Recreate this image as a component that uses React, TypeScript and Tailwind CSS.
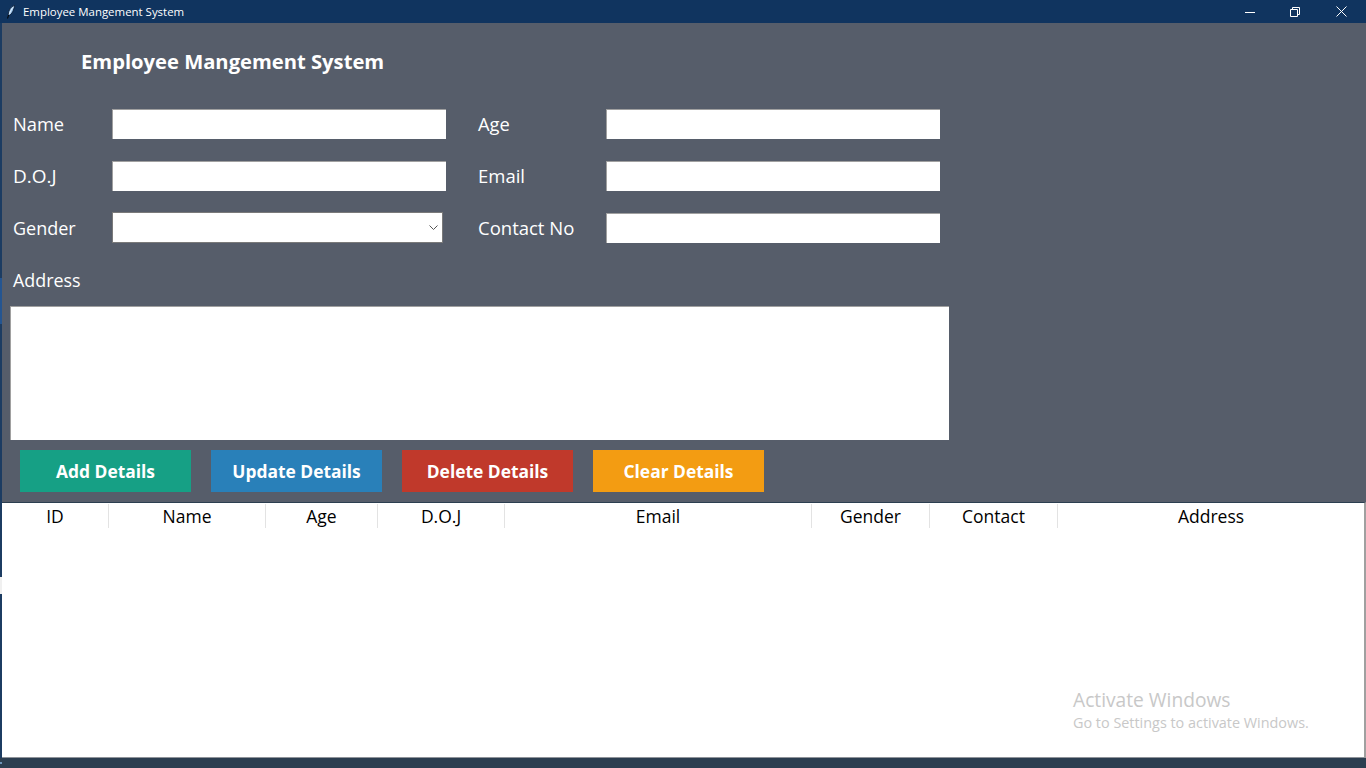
import React from "react";

const font = { fontFamily: '"Open Sans", "Noto Sans", sans-serif' };

function Field({ label, labelW, inputW, size = "text-[18.3px]" }: { label: string; labelW: string; inputW: string; size?: string }) {
  return (
    <div className="flex items-center">
      <span className={`${labelW} ${size} leading-[24px] text-white`}>{label}</span>
      <input className={`${inputW} h-[30px] bg-white border-l border-t border-[#a0a0a0] outline-none`} readOnly />
    </div>
  );
}

const buttons = [
  { t: "Add Details", c: "bg-[#16a085]" },
  { t: "Update Details", c: "bg-[#2980b9]" },
  { t: "Delete Details", c: "bg-[#c0392b]" },
  { t: "Clear Details", c: "bg-[#f39c12]" },
];

const cols = [
  { t: "ID", w: "w-[107px]" },
  { t: "Name", w: "w-[157px]" },
  { t: "Age", w: "w-[112px]" },
  { t: "D.O.J", w: "w-[127px]" },
  { t: "Email", w: "w-[307px]" },
  { t: "Gender", w: "w-[118px]" },
  { t: "Contact", w: "w-[128px]" },
  { t: "Address", w: "flex-1" },
];

export default function App() {
  return (
    <div className="relative w-[1366px] h-[768px] flex flex-col bg-[#2c3e50] overflow-hidden" style={font}>
      {/* sliver of the desktop showing down the window's left edge */}
      <div className="absolute left-0 top-[23px] w-[2px] h-[735px] bg-[#1c3c62]" />
      <div className="absolute left-0 top-[278px] w-[2px] h-[46px] bg-[#245591]" />
      <div className="absolute left-0 top-[577px] w-[2px] h-[17px] bg-[#f0f0f0]" />
      <div className="absolute left-0 top-[762px] w-[2px] h-[2px] bg-[#6d93b8]" />

      <div className="h-[23px] shrink-0 bg-[#10345f] flex items-center text-white">
        <svg className="ml-[7px] w-[8px] h-[14px]" viewBox="0 0 8 14" fill="none">
          <path d="M7.5 .3C4 1.5 1.5 5 1.2 9.5L2 10.5C4.8 9.5 7 5 7.5 .3Z" fill="#9cc8f0" stroke="#06142a" strokeWidth="0.8" />
          <path d="M6.5 1.8C4.8 3.8 3.2 6.5 2.4 9" stroke="#ffffff" strokeWidth="0.7" />
          <path d="M1.5 10L.6 13.5" stroke="#000" strokeWidth="1" />
        </svg>
        <span className="ml-[8px] text-[11.45px] leading-[23px]">Employee Mangement System</span>
        <div className="ml-auto flex items-center">
          <svg className="w-[10px] h-[10px] mr-[35px]" viewBox="0 0 10 10"><path d="M0 5.5h10" stroke="#fff" strokeWidth="1" /></svg>
          <svg className="w-[10px] h-[10px] mr-[36px]" viewBox="0 0 10 10" fill="none">
            <path d="M.5 2.5h7v7h-7z M2.5 2.5v-2h7v7h-2" stroke="#fff" strokeWidth="1" />
          </svg>
          <svg className="w-[11px] h-[11px] mr-[19px]" viewBox="0 0 11 11"><path d="M.5.5l10 10M10.5.5l-10 10" stroke="#fff" strokeWidth="1" /></svg>
        </div>
      </div>

      <div className="h-[479px] shrink-0 ml-[2px] bg-[#565d6a] flex flex-col">
        <div className="ml-[79px] mt-[23px] text-[20.2px] leading-[30px] font-bold text-white">Employee Mangement System</div>

        <div className="ml-[11px] mt-[33px] flex flex-col">
          <div className="flex gap-[32px]">
            <Field label="Name" labelW="w-[99px]" inputW="w-[334px]" />
            <Field label="Age" labelW="w-[128px]" inputW="w-[334px]" />
          </div>
          <div className="flex gap-[32px] mt-[22px]">
            <Field label="D.O.J" labelW="w-[99px]" inputW="w-[334px]" size="text-[19px]" />
            <Field label="Email" labelW="w-[128px]" inputW="w-[334px]" size="text-[18.5px]" />
          </div>
          <div className="flex gap-[32px] mt-[21px] items-end">
            <div className="flex items-center w-[433px]">
              <span className="w-[99px] text-[18px] leading-[24px] text-white">Gender</span>
              <div className="w-[331px] h-[31px] bg-white border border-[#7a7a7a] flex items-center justify-end pr-[4px]">
                <svg className="w-[9px] h-[5px]" viewBox="0 0 9 5" fill="none"><path d="M.5.5l4 4 4-4" stroke="#555" strokeWidth="1" /></svg>
              </div>
            </div>
            <Field label="Contact No" labelW="w-[128px]" inputW="w-[334px]" size="text-[18.5px]" />
          </div>
        </div>

        <div className="ml-[11px] mt-[25px] text-[17.9px] leading-[24px] text-white">Address</div>
        <div className="ml-[8px] mt-[14px] w-[939px] h-[134px] bg-white border-l border-t border-[#a0a0a0]" />

        <div className="ml-[18px] mt-[10px] flex gap-[20px]">
          {buttons.map((b) => (
            <div key={b.t} className={`w-[171px] h-[42px] ${b.c} flex items-center justify-center text-white font-bold text-[17.4px]`}>
              {b.t}
            </div>
          ))}
        </div>
      </div>

      <div className="h-[256px] shrink-0 ml-[2px] bg-white border-t border-t-[#2c3e50] border-b border-b-[#8f9399] border-r-2 border-r-[#a0a0a0]">
        <div className="flex h-[24px] mt-[1px]">
          {cols.map((c, i) => (
            <div
              key={c.t}
              className={`${c.w} ${i < cols.length - 1 ? "border-r border-[#e3e3e3]" : ""} flex items-center justify-center text-black text-[17.5px] leading-[24px]`}
            >
              {c.t}
            </div>
          ))}
        </div>
        <div className="relative h-[229px]">
          <div className="absolute left-[1071px] top-[159px] text-[19.2px] leading-[26px] text-[#c8c8c8]">Activate Windows</div>
          <div className="absolute left-[1071px] top-[185px] text-[14.4px] leading-[20px] text-[#c8c8c8]">Go to Settings to activate Windows.</div>
        </div>
      </div>
    </div>
  );
}
